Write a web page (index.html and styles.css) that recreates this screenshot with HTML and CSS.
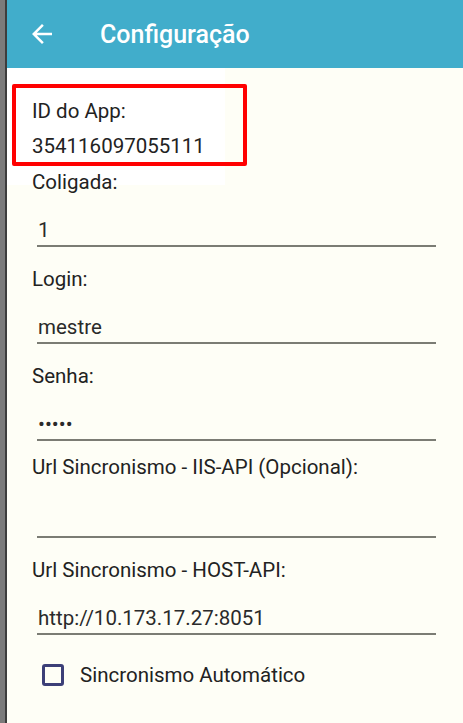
FILE: index.html
```html
<!DOCTYPE html>
<html lang="pt-BR">
<head>
<meta charset="utf-8">
<title>Configuração</title>
<link rel="stylesheet" href="styles.css">
</head>
<body>
<div class="edge"></div>
<div class="app">
  <header class="topbar">
    <svg class="back" viewBox="0 0 24 24" width="30" height="30" aria-hidden="true">
      <path d="M20 11H7.83l5.59-5.59L12 4l-8 8 8 8 1.41-1.41L7.83 13H20v-2z" fill="#ffffff"/>
    </svg>
    <h1 class="title">Configuração</h1>
  </header>
  <main class="content">
    <div class="idbox">
      <div class="label">ID do App:</div>
      <div class="idvalue">354116097055111</div>
    </div>
    <div class="field field--tight">
      <div class="label">Coligada:</div>
      <div class="input">1</div>
    </div>
    <div class="field">
      <div class="label">Login:</div>
      <div class="input">mestre</div>
    </div>
    <div class="field">
      <div class="label">Senha:</div>
      <div class="input input--pwd">•••••</div>
    </div>
    <div class="field field--short">
      <div class="label">Url Sincronismo - IIS-API (Opcional):</div>
      <div class="input input--empty"></div>
    </div>
    <div class="field">
      <div class="label">Url Sincronismo - HOST-API:</div>
      <div class="input">http://10.173.17.27:8051</div>
    </div>
    <label class="check">
      <span class="box"></span>
      <span class="check-text">Sincronismo Automático</span>
    </label>
  </main>
</div>
</body>
</html>
```

FILE: styles.css
```css
html, body {
  margin: 0;
  padding: 0;
  height: 100%;
}

body {
  display: flex;
  height: 723px;
  overflow: hidden;
  font-family: Roboto, "Noto Sans", "Liberation Sans", sans-serif;
  background: #fefef6;
}

.edge {
  width: 7px;
  flex: 0 0 7px;
  background: linear-gradient(to right, #7b7b7b 0, #7b7b7b 5px, #3d3d3d 5px, #3d3d3d 7px);
}

.app {
  flex: 1;
  display: flex;
  flex-direction: column;
  background: #fefef6;
}

.topbar {
  height: 68px;
  flex: 0 0 68px;
  display: flex;
  align-items: center;
  background: #41adcb;
}

.back {
  display: block;
  margin-left: 20px;
  flex: 0 0 30px;
}

.title {
  margin: 0 0 0 43px;
  font-size: 25px;
  font-weight: 500;
  color: #ffffff;
  letter-spacing: 0;
}

.content {
  position: relative;
  z-index: 0;
  padding-top: 16px;
  font-size: 20.5px;
  line-height: 24px;
  color: #222222;
}

.content::before {
  content: "";
  position: absolute;
  left: 0;
  top: 0;
  width: 218px;
  height: 117px;
  background: #ffffff;
  z-index: -1;
}

.idbox {
  box-sizing: border-box;
  margin-left: 5px;
  width: 235px;
  height: 82px;
  border: 4px solid #ff0000;
  border-radius: 2px;
  padding: 11px 0 0 16px;
}

.idbox .label {
  margin-left: 0;
}

.idvalue {
  margin-top: 11px;
  color: #222222;
}

.label {
  margin-left: 25px;
  color: #222222;
}

.field {
  margin-top: 20px;
}

.field--tight {
  margin-top: 4px;
}

.field--short {
  margin-top: 14px;
}

.input {
  margin: 24px 27px 0 30px;
  height: 24px;
  padding: 0 0 3px 1px;
  border-bottom: 2px solid #7b7c74;
  color: #2a2a2a;
}

.input--empty {
  height: 30px;
}

.input--pwd {
  letter-spacing: 0;
}

.check {
  display: flex;
  align-items: center;
  margin: 28px 0 0 35px;
  height: 24px;
}

.box {
  box-sizing: border-box;
  width: 22px;
  height: 22px;
  border: 3px solid #3c3f78;
  border-radius: 3px;
}

.check-text {
  margin-left: 16px;
  color: #222222;
}
```
